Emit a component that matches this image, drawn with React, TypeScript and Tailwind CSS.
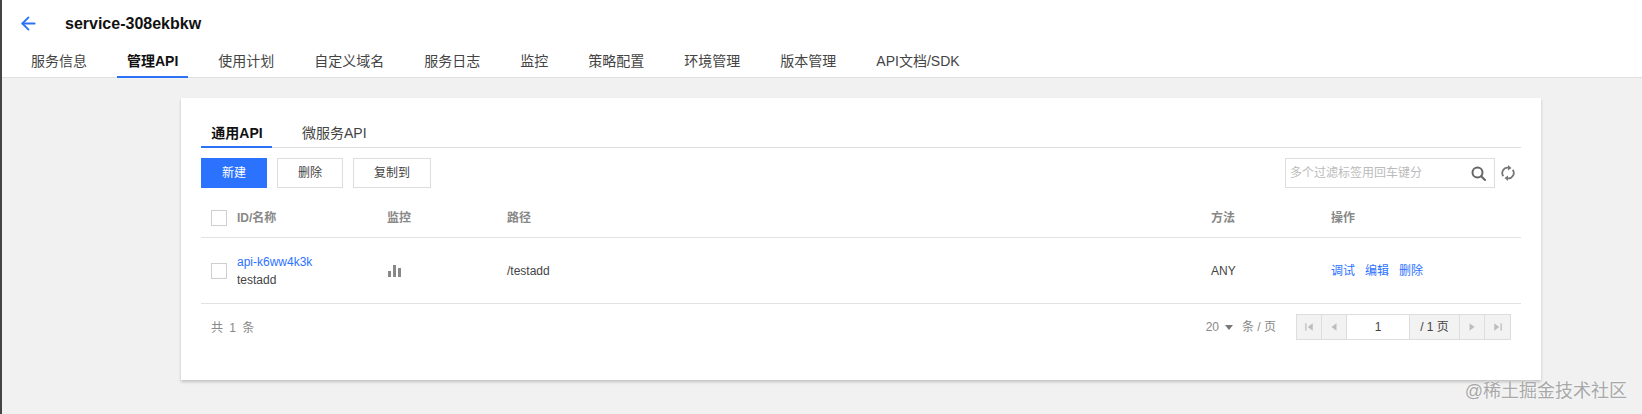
import React from "react";
import { ArrowLeft } from "lucide-react";

const NAV_TABS = ["服务信息", "管理API", "使用计划", "自定义域名", "服务日志", "监控", "策略配置", "环境管理", "版本管理", "API文档/SDK"];

function Checkbox() {
  return <span className="block w-4 h-4 shrink-0 bg-white border border-[#cfcfcf]" />;
}

function Row({ children, className = "" }: { children: React.ReactNode; className?: string }) {
  return (
    <div className={`grid grid-cols-[176px_120px_1fr_120px_200px] items-center border-b border-[#e2e2e2] ${className}`}>
      {children}
    </div>
  );
}

function PagerButton({ path }: { path: string }) {
  return (
    <span className="flex items-center justify-center w-[25px] border-r border-[#dddddd] last:border-r-0">
      <svg viewBox="0 0 8 8" className="w-[10px] h-[10px] fill-[#bdbdbd]">
        <path d={path} />
      </svg>
    </span>
  );
}

export default function App() {
  return (
    <div className="relative h-[414px] overflow-hidden bg-[#f1f1f1] border-l-2 border-[#444444] text-[12px] text-[#444444] font-['Liberation_Sans','Noto_Sans_CJK_SC',sans-serif]">
      {/* 상단 헤더 */}
      <header className="h-[78px] bg-white border-b border-[#e0e0e0] flex flex-col">
        <div className="flex items-center h-[47px] pl-[16px]">
          <ArrowLeft className="w-[21px] h-[21px] text-[#2b72f6]" strokeWidth={2.1} />
          <h1 className="ml-[26px] text-[16px] font-bold text-[#111111]">service-308ekbkw</h1>
        </div>
        <nav className="flex gap-5 pl-[19px] h-[30px]">
          {NAV_TABS.map((tab) => (
            <a
              key={tab}
              className={`px-2.5 h-[31px] text-[14px] leading-[29px] border-b-2 ${
                tab === "管理API" ? "font-bold text-[#111111] border-[#2b72f6]" : "text-[#444444] border-transparent"
              } ${tab === "API文档/SDK" ? "text-[#111111]" : ""}`}
            >
              {tab}
            </a>
          ))}
        </nav>
      </header>

      {/* 카드 */}
      <main className="ml-[179px] mr-[101px] mt-5 h-[282px] bg-white shadow-[0_2px_3px_rgba(0,0,0,0.2)] px-5 pt-5">
        <div className="flex h-[30px] border-b border-[#dddddd] text-[14px]">
          <a className="w-[71px] h-[30px] pl-px text-center leading-[30px] font-bold text-[#111111] border-b-2 border-[#2b72f6]">通用API</a>
          <a className="ml-[30px] leading-[30px] text-[#444444]">微服务API</a>
        </div>

        <div className="flex items-center mt-2.5 h-[30px]">
          <button className="w-[66px] h-[30px] bg-[#2b72ff] text-white">新建</button>
          <button className="w-[66px] h-[30px] ml-2.5 border border-[#dddddd] bg-white">删除</button>
          <button className="w-[78px] h-[30px] ml-2.5 border border-[#dddddd] bg-white">复制到</button>
          <div className="ml-auto flex items-center w-[210px] h-[30px] border border-[#dddddd] pl-1 pr-2 text-[#bbbbbb]">
            <span className="flex-1">多个过滤标签用回车键分</span>
            <svg viewBox="0 0 15 15" className="w-[15px] h-[15px] fill-none stroke-[#666666]" strokeWidth="2">
              <circle cx="6.5" cy="6.5" r="5" />
              <path d="M10.2 10.2L14 14" strokeLinecap="round" />
            </svg>
          </div>
          <svg viewBox="0 0 14 16" className="w-[14px] h-4 ml-[6px] mr-[6px] fill-[#777777]">
            <path d="M2.3 11.2A5.4 5.4 0 0 1 7.5 2.7" className="fill-none stroke-[#777777]" strokeWidth="1.8" />
            <path d="M7 0L10.5 3L7 5.6z" />
            <path d="M11.7 4.8A5.4 5.4 0 0 1 6.5 13.3" className="fill-none stroke-[#777777]" strokeWidth="1.8" />
            <path d="M7 16L3.5 13L7 10.4z" />
          </svg>
        </div>

        <Row className="h-[50px] pt-2.5 font-bold text-[#888888]">
          <div className="flex items-center gap-2.5 pl-2.5"><Checkbox /><span>ID/名称</span></div>
          <div className="pl-2.5">监控</div>
          <div className="pl-2.5">路径</div>
          <div className="pl-2.5">方法</div>
          <div className="pl-2.5">操作</div>
        </Row>

        <Row className="h-[66px]">
          <div className="flex items-center gap-2.5 pl-2.5">
            <Checkbox />
            <div className="leading-[18px]">
              <a className="block text-[#2b72ff]">api-k6ww4k3k</a>
              <span className="block">testadd</span>
            </div>
          </div>
          <div className="pl-[11px]">
            <svg viewBox="0 0 14 14" className="w-3.5 h-3.5 fill-[#888888]">
              <rect x="0" y="7" width="3" height="6" />
              <rect x="5" y="1" width="3" height="12" />
              <rect x="10" y="4" width="3" height="9" />
            </svg>
          </div>
          <div className="pl-2.5">/testadd</div>
          <div className="pl-2.5">ANY</div>
          <div className="pl-2.5 flex gap-2.5 text-[#2b72ff]">
            <a>调试</a>
            <a>编辑</a>
            <a>删除</a>
          </div>
        </Row>

        {/* 페이지네이션 */}
        <div className="flex items-center h-[46px] pl-2.5 pr-2.5 text-[#888888]">
          <span className="pt-0.5 tracking-[1px] [word-spacing:1px]">共 1 条</span>
          <span className="ml-auto">20</span>
          <span className="ml-[6px] w-0 h-0 border-x-[4px] border-x-transparent border-t-[5px] border-t-[#777777]" />
          <span className="ml-[9px]">条 / 页</span>
          <div className="ml-5 flex h-[26px] bg-[#f2f2f2] border border-[#dddddd]">
            <PagerButton path="M1 1h1v6H1zM7 1v6L3 4z" />
            <PagerButton path="M6 1v6L2 4z" />
            <span className="w-[63px] bg-white border-r border-[#dddddd] text-center leading-[24px] text-[#444444]">1</span>
            <span className="w-[50px] border-r border-[#dddddd] text-center leading-[24px] text-[#444444]">/ 1 页</span>
            <PagerButton path="M2 1v6l4-3z" />
            <PagerButton path="M1 1v6l4-3zM6 1h1v6H6z" />
          </div>
        </div>
      </main>

      {/* 워터마크 */}
      <span className="absolute right-[15px] top-[379px] text-[18px] leading-6 text-[#a8a8a8] [text-shadow:0_0_2px_#ffffff]">@稀土掘金技术社区</span>
    </div>
  );
}
